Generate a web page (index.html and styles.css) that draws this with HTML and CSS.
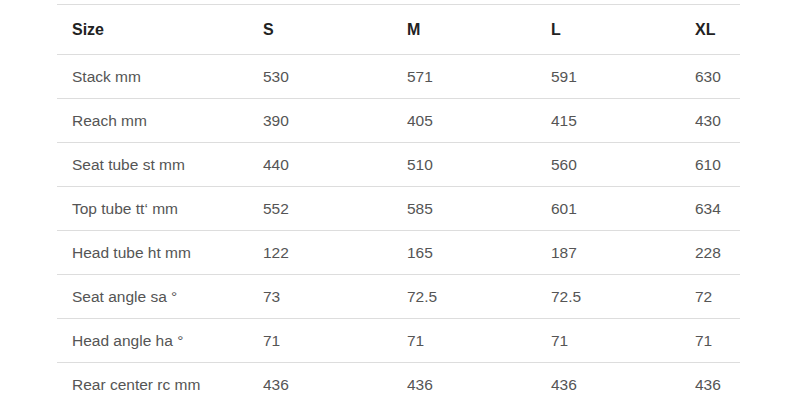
FILE: index.html
```html
<!DOCTYPE html>
<html>
<head>
<meta charset="utf-8">
<link rel="stylesheet" href="styles.css">
</head>
<body>
<div class="wrap">
<table class="geo">
<colgroup>
<col class="c0"><col class="c1"><col class="c1"><col class="c1"><col class="c4">
</colgroup>
<thead>
<tr><th>Size</th><th>S</th><th>M</th><th>L</th><th>XL</th></tr>
</thead>
<tbody>
<tr><td>Stack mm</td><td>530</td><td>571</td><td>591</td><td>630</td></tr>
<tr><td>Reach mm</td><td>390</td><td>405</td><td>415</td><td>430</td></tr>
<tr><td>Seat tube st mm</td><td>440</td><td>510</td><td>560</td><td>610</td></tr>
<tr><td>Top tube tt‘ mm</td><td>552</td><td>585</td><td>601</td><td>634</td></tr>
<tr><td>Head tube ht mm</td><td>122</td><td>165</td><td>187</td><td>228</td></tr>
<tr><td>Seat angle sa °</td><td>73</td><td>72.5</td><td>72.5</td><td>72</td></tr>
<tr><td>Head angle ha °</td><td>71</td><td>71</td><td>71</td><td>71</td></tr>
<tr><td>Rear center rc mm</td><td>436</td><td>436</td><td>436</td><td>436</td></tr>
</tbody>
</table>
</div>
</body>
</html>
```
FILE: styles.css
```css
html, body {
  margin: 0;
  padding: 0;
  background: #fff;
}
.wrap {
  padding: 4px 0 0 57px;
}
.geo {
  width: 683px;
  border-collapse: collapse;
  table-layout: fixed;
  font-family: "Liberation Sans", Arial, sans-serif;
  font-size: 15.5px;
}
.c0 { width: 191px; }
.c1 { width: 144px; }
.c4 { width: 60px; }
.geo th, .geo td {
  text-align: left;
  padding: 0 0 0 15px;
  border-top: 1px solid #dddddd;
  white-space: nowrap;
}
.geo th {
  height: 49px;
  font-size: 16px;
  font-weight: bold;
  color: #222;
}
.geo td {
  height: 43px;
  color: #555;
}
```
